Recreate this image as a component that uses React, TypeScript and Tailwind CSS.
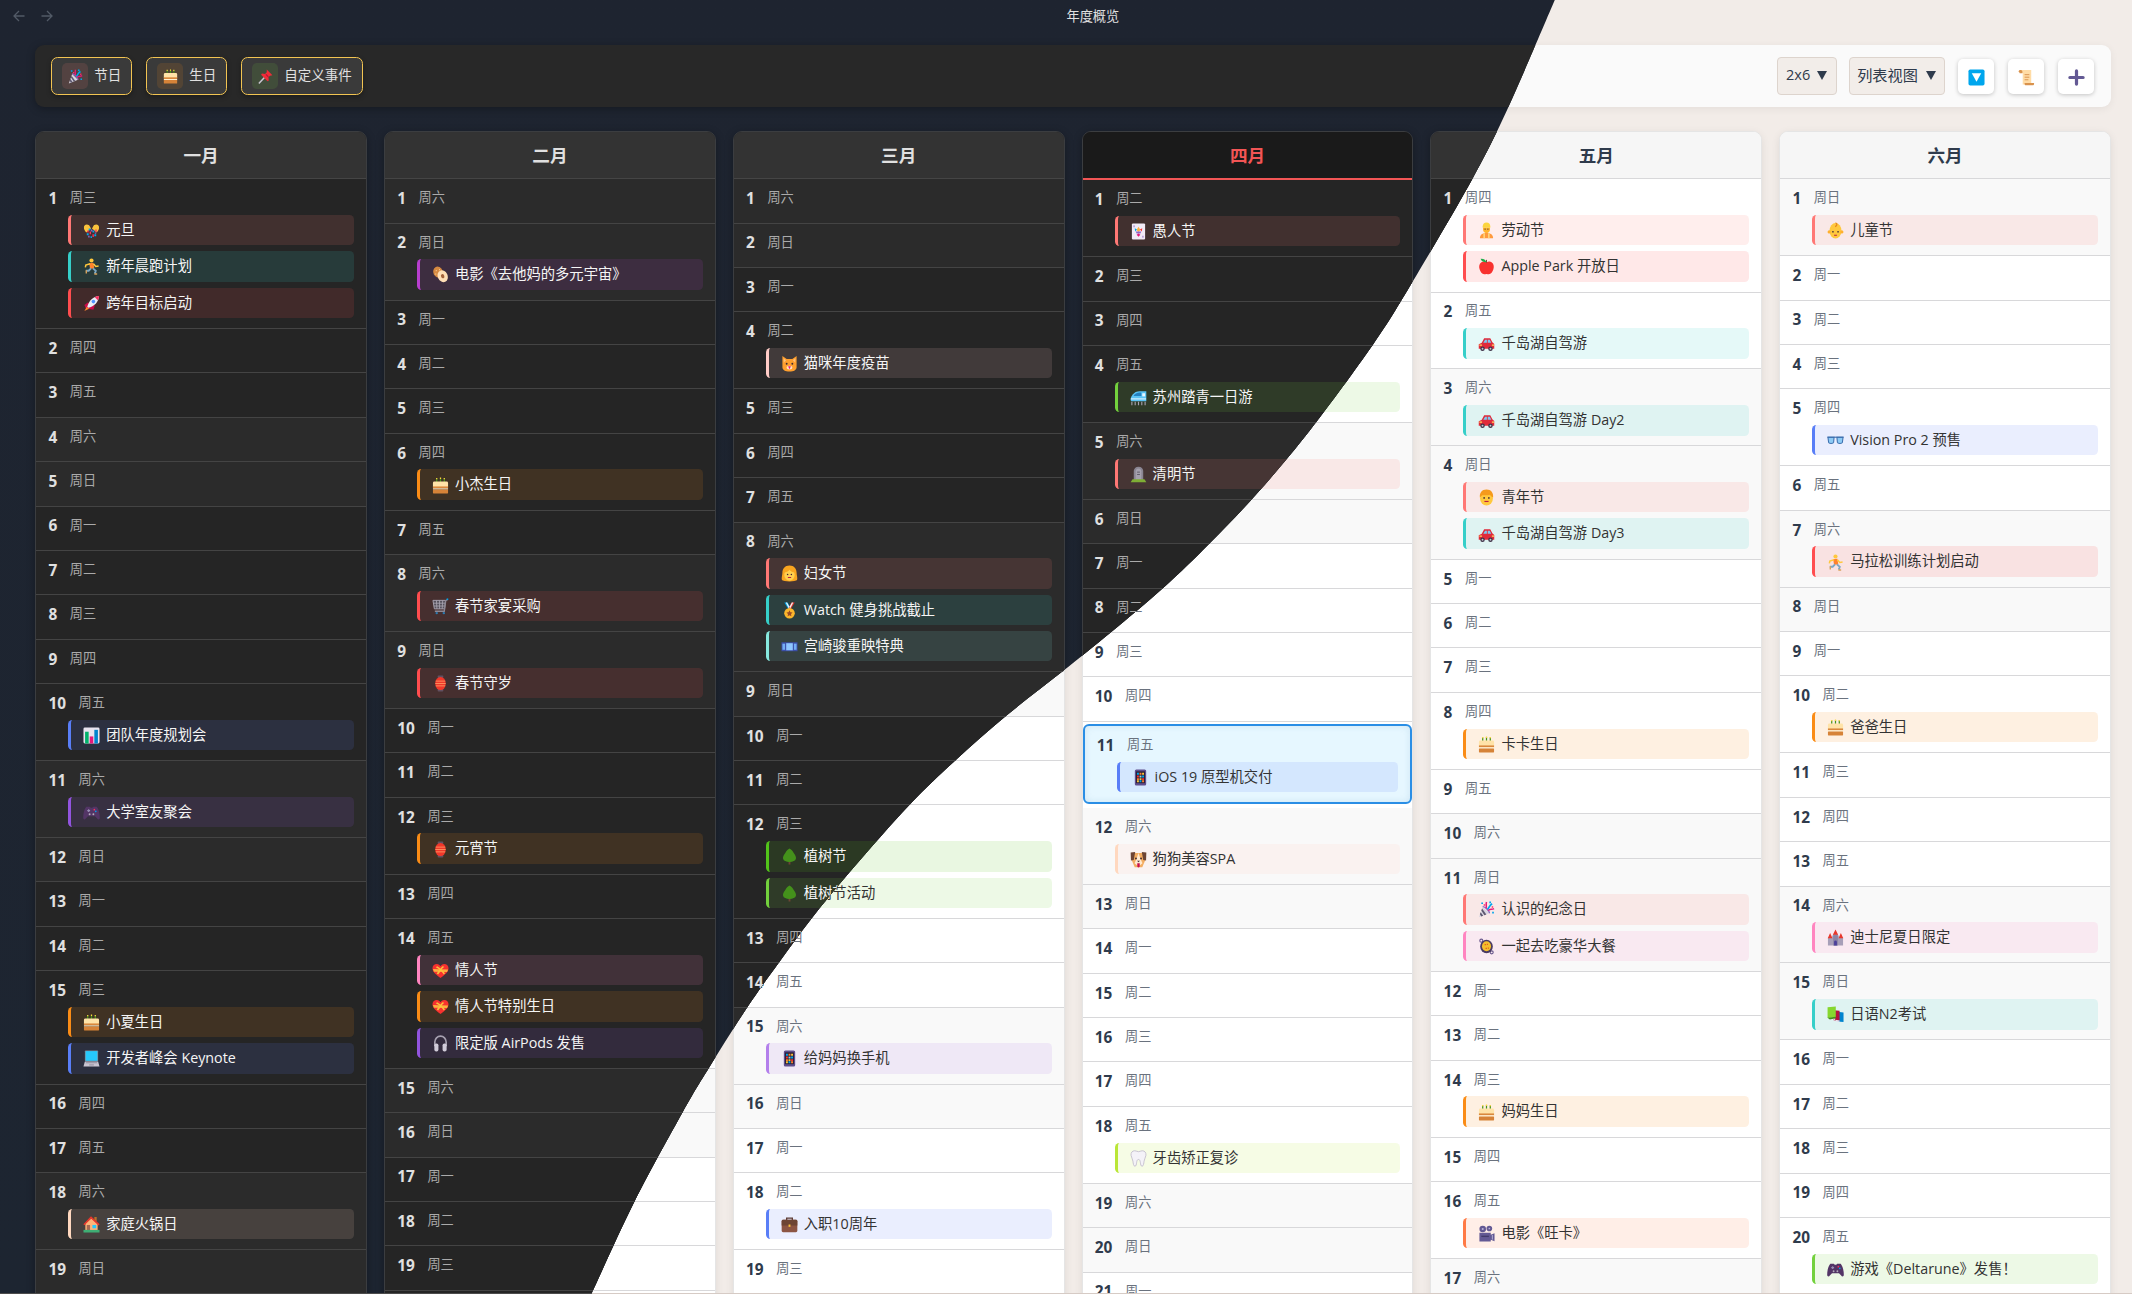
import React from "react";
import clsx from "clsx";

/* ------------------------------------------------------------------ icons */

const GLYPHS: Record<string, React.ReactNode> = {
  confetti: (
    <>
      <path d="M1 6C.5 3 4 1.500 6.500 3.500L8.500 7 3.500 11C1.800 9.500 1 7.500 1 6Z" fill="#f9c23c" />
      <path d="M17 6C17.500 3 14 1.500 11.500 3.500L9.500 7 14.500 11C16.200 9.500 17 7.500 17 6Z" fill="#f9c23c" />
      <path d="M6 7h2v2H6zM10 9h2v2h-2zM4 12h2v2H4zM12 13h2v2h-2zM8 15h1.500v2H8z" fill="#00a6ed" />
      <path d="M7 10h1.500v3H7zM13 8h1.500v2.500H13zM10 13h1.500v3H10zM4.500 9H6v2H4.500z" fill="#f92f60" />
      <path d="M8.500 8H10v2H8.500zM5.500 14.500H7v2H5.500zM12.500 11H14v1.500h-1.500z" fill="#8d65c5" />
    </>
  ),
  runner: (
    <>
      <circle cx="9" cy="2.600" r="2.200" fill="#ffc83d" />
      <path d="M6.500 5.500l4.500-.5 1 6-4.500.5Z" fill="#ff822d" />
      <path d="M7.500 6L3 7.500 2.500 10M11 6l2.500 3 3-.5" stroke="#ffc83d" strokeWidth="1.600" fill="none" />
      <path d="M8.500 11L6 13.500H3M10.500 11l3 2.500-1 3" stroke="#7aa7c4" strokeWidth="2" fill="none" />
      <path d="M3.500 13v3.500M12 17h3" stroke="#d8a25a" strokeWidth="1.500" />
    </>
  ),
  rocket: (
    <>
      <path d="M5 8L1.500 10.500 3 14l8 1.500L12.500 11Z" fill="#ca0b4a" />
      <path d="M4.500 12.500C6 6 11 1.500 17 1c-.500 6.500-5 11-11.500 12.500Z" fill="#e9eef5" />
      <path d="M12.500 2.500C14 1.500 15.500 1 17 1c0 1.500-.5 3-1.300 4.500Z" fill="#f92f60" />
      <circle cx="11" cy="7" r="1.900" fill="#5092ff" />
      <path d="M4 12.500L1.500 17l5-2.500Z" fill="#ff822d" />
    </>
  ),
  chart: (
    <>
      <rect x=".5" y=".5" width="17" height="17" rx="1.500" fill="#e8e4ef" />
      <rect x="2.200" y="5" width="3.800" height="12.500" fill="#00b26b" />
      <rect x="7.100" y="10" width="3.800" height="7.500" fill="#e5187a" />
      <rect x="12" y="3" width="3.800" height="14.500" fill="#0084ce" />
    </>
  ),
  gamepad: (
    <>
      <path d="M3.500 3h3.700l1 1h1.600l1-1h3.700c1.800 2 3.300 6.500 3.300 11.500 0 2-1.800 2.500-2.800.8L12.700 13H5.300L3 15.300C2 17 .2 16.500.2 14.500.2 9.500 1.700 5 3.500 3Z" fill="#533566" />
      <path d="M4.500 7h3M6 5.500v3" stroke="#998eb5" strokeWidth="1.200" />
      <circle cx="12" cy="6" r=".9" fill="#f92f60" />
      <circle cx="13.500" cy="7.800" r=".9" fill="#00a6ed" />
      <circle cx="7" cy="10.800" r="1" fill="#b4acbc" />
      <circle cx="11" cy="10.800" r="1" fill="#b4acbc" />
    </>
  ),
  cake: (
    <>
      <path d="M5 1.500v5M9 1v5.500M13 1.500v5" stroke="#44911b" strokeWidth="1.300" />
      <path d="M5 1v1.500M9 .5V2M13 1v1.500" stroke="#fcd53f" strokeWidth="1.300" />
      <path d="M1 6.300A1.500 1.500 0 0 1 2.500 4.800h13A1.500 1.500 0 0 1 17 6.300V11H1Z" fill="#ffe3a8" />
      <rect x="1" y="10" width="16" height="2" fill="#d9883d" />
      <rect x="1" y="12" width="16" height="1.300" fill="#fff1d0" />
      <rect x="1" y="13.200" width="16" height="4.200" rx=".6" fill="#d68338" />
    </>
  ),
  laptop: (
    <>
      <rect x="2" y=".5" width="14" height="11.500" rx=".8" fill="#7d8794" />
      <rect x="2.800" y="1.200" width="12.400" height="10.200" fill="#26c9fc" />
      <path d="M2 12.200h14l1.500 5.200H.5Z" fill="#c9c5d1" />
      <path d="M3 13.500h12M6.500 15.800h5" stroke="#8f8a99" strokeWidth="1" />
    </>
  ),
  house: (
    <>
      <path d="M2.500 8L9 2.500 15.500 8v7h-13Z" fill="#ffb478" />
      <path d="M12 1h2.500v5L12 4Z" fill="#b97028" />
      <path d="M1 9.300L8.500 1.500 17 9.300" stroke="#e8372c" strokeWidth="1.800" fill="none" />
      <rect x="4" y="9.500" width="3.500" height="6" fill="#a56953" />
      <rect x="10" y="9.500" width="4" height="3.500" fill="#26c9fc" />
      <path d="M.5 14.700h17v2.800H.5Z" fill="#3fae74" />
    </>
  ),
  bagel: (
    <>
      <ellipse cx="6.500" cy="6.500" rx="5" ry="6" transform="rotate(-25 6.500 6.500)" fill="#d68a41" />
      <path d="M4.500 4.500v1M8 3.500v1M4 8v1M9 7l.5 1" stroke="#ffe2b8" strokeWidth="1" />
      <ellipse cx="11.300" cy="10.800" rx="5.200" ry="6.500" transform="rotate(-25 11.300 10.800)" fill="#ffdfb5" />
      <ellipse cx="11.300" cy="10.800" rx="1.700" ry="2.300" transform="rotate(-25 11.300 10.800)" fill="#a5633a" />
    </>
  ),
  cart: (
    <>
      <path d="M1 2.500h13.500L13.300 11.500H2.500Z" fill="#55515c" stroke="#a9a4b0" strokeWidth="1" />
      <path d="M1.500 5.500h12.500M2 8.500h11.500M4.700 2.500l.5 9M8 2.500v9M11.300 2.500l-.5 9" stroke="#a9a4b0" strokeWidth=".9" />
      <path d="M16.500 1.500L14.500 3 13 14H3" stroke="#8d8894" strokeWidth="1.400" fill="none" />
      <path d="M15.500 1l1.700.5" stroke="#00a6ed" strokeWidth="1.600" />
      <circle cx="5" cy="16" r="1.300" fill="#2b7ab0" />
      <circle cx="12.500" cy="16" r="1.300" fill="#2b7ab0" />
    </>
  ),
  lantern: (
    <>
      <rect x="6" y=".5" width="6" height="3" rx="1" fill="#635061" />
      <rect x="6" y="14.500" width="6" height="3" rx="1" fill="#635061" />
      <ellipse cx="9" cy="9" rx="5.600" ry="7" fill="#f0372a" />
      <path d="M4 6.500h10M3.500 9h11M4 11.500h10" stroke="#ff9a62" strokeWidth=".9" />
    </>
  ),
  heart: (
    <>
      <path d="M9 17C4 13.300.5 10.500.5 6.700.5 3.500 2.800 2 5 2c2 0 3.300 1.200 4 2.500C9.700 3.200 11 2 13 2c2.200 0 4.500 1.500 4.500 4.700C17.500 10.500 14 13.300 9 17Z" fill="#f8312f" />
      <path d="M1 7.500l16 .5-1 2.500L2 10.300Z" fill="#fcb03f" />
      <path d="M4 5.500l4 2.500-3 4.300 1.500 1 3-4 3 4 1.300-1.300L10 8l3-3-2-.5-2 2.500-3.500-2.500Z" fill="#fcc33c" />
    </>
  ),
  headphones: (
    <>
      <path d="M3 12V7.500a6 6.300 0 0 1 12 0V12" stroke="#a7a1b0" strokeWidth="1.700" fill="none" />
      <rect x="2.500" y="9" width="4.300" height="8.500" rx="1.900" fill="#d0cbd8" />
      <rect x="11.200" y="9" width="4.300" height="8.500" rx="1.900" fill="#d0cbd8" />
    </>
  ),
  cat: (
    <>
      <path d="M1.500 1L6 4.300h6L16.500 1v12c0 3-3 4.500-7.500 4.500S1.500 16 1.500 13Z" fill="#ff9f2e" />
      <path d="M2.800 3.500l2.700 2L3 8ZM15.200 3.500l-2.700 2L15 8Z" fill="#ffc07a" />
      <circle cx="6" cy="9.300" r="1" fill="#402a32" />
      <circle cx="12" cy="9.300" r="1" fill="#402a32" />
      <ellipse cx="9" cy="13.300" rx="3" ry="2" fill="#ffe4c4" />
      <path d="M7.500 12h3L9 15Z" fill="#e5187a" />
    </>
  ),
  woman: (
    <>
      <path d="M9 .5C4 .5 1.500 4 1.500 8c0 3-1.300 5.500-.5 8 1.500 2 14.500 2 16 0 .8-2.500-.5-5-.5-8C16.500 4 14 .5 9 .5Z" fill="#f9a520" />
      <ellipse cx="9" cy="10.500" rx="5.500" ry="6.300" fill="#ffcf4f" />
      <path d="M3.500 8c2 0 4.500-1.500 5.500-3 1 1.500 3.500 3 5.500 3l-1-4.500-4.500-2-4.500 2Z" fill="#f9a520" />
      <circle cx="7" cy="10" r=".8" fill="#402a32" />
      <circle cx="11" cy="10" r=".8" fill="#402a32" />
      <path d="M7.300 13.200h3.400" stroke="#bb1d45" strokeWidth="1.100" />
    </>
  ),
  medal: (
    <>
      <path d="M3.500.5H7L10 6l-2 2Z" fill="#00a6ed" />
      <path d="M14.500.5H11L8 6l2 2Z" fill="#e8372c" />
      <path d="M5 .5h1.500l3 5.500-1 1.500ZM13 .5h-1.500l-3 5.500 1 1.500Z" fill="#eef2f6" />
      <circle cx="9" cy="12" r="5.600" fill="#fcb62b" />
      <path d="M9 8.800l1 2.100 2.200.3-1.600 1.500.4 2.300-2-1.100-2 1.100.4-2.300-1.600-1.500 2.200-.3Z" fill="#9a4a26" />
    </>
  ),
  film: (
    <>
      <rect x=".5" y="4.500" width="17" height="9.500" fill="#3c4fa8" />
      <rect x="5.500" y="5.500" width="7" height="7.500" fill="#8fc7ff" />
      <rect x="1.500" y="6" width="2.800" height="6.500" fill="#74aef5" />
      <rect x="13.700" y="6" width="2.800" height="6.500" fill="#74aef5" />
    </>
  ),
  tree: (
    <>
      <rect x="8" y="12" width="2" height="5.500" fill="#6d4534" />
      <path d="M9 .5C11.500 1.700 12.300 3.300 13.300 5c1.500 2 3 4 2.500 6.400C15.300 13.700 12.500 14.700 9 14.700S2.700 13.700 2.200 11.400C1.700 9 3.200 7 4.700 5 5.700 3.300 6.500 1.700 9 .5Z" fill="#44911b" />
    </>
  ),
  phone: (
    <>
      <rect x="3" y=".5" width="12" height="17" rx="1.600" fill="#5d4d8c" />
      <rect x="4.300" y="2.500" width="9.400" height="12.500" fill="#2a1f35" />
      <path d="M5.300 4h2v2h-2zM10.700 7h2v2h-2zM8 12h2v2H8z" fill="#00a6ed" />
      <path d="M8 4h2v2H8zM5.300 9.700h2v2h-2zM10.700 12h2v2h-2z" fill="#ff822d" />
      <path d="M10.700 4h2v2h-2zM8 9.700h2v2H8zM5.300 12h2v2h-2z" fill="#f9c23c" />
      <path d="M5.300 7h2v2h-2zM10.700 9.700h2v2h-2z" fill="#f8312f" />
      <path d="M8 7h2v2H8z" fill="#7fd6f5" />
    </>
  ),
  briefcase: (
    <>
      <path d="M6 4.500V2.300h6v2.200" stroke="#5c3a33" strokeWidth="1.400" fill="none" />
      <rect x=".7" y="4" width="16.600" height="13.200" rx="1.500" fill="#8c5543" />
      <path d="M.7 5.500A1.500 1.500 0 0 1 2.200 4h13.600a1.500 1.500 0 0 1 1.500 1.500V10H.7Z" fill="#6d4534" />
      <rect x="8" y="9" width="2" height="2.500" fill="#f9c23c" />
    </>
  ),
  joker: (
    <>
      <rect x="2" y=".5" width="14" height="17" rx="1.200" fill="#f1eaf6" />
      <path d="M5.500 9L5 5.500l2.500 1.500Z" fill="#00a6ed" />
      <path d="M7 7.500L9 4l2 3.500-2 2Z" fill="#fcb03f" />
      <path d="M12.500 9L13 5.500 10.500 7Z" fill="#f8312f" />
      <path d="M6 9h6l-1 2H7Z" fill="#8d65c5" />
      <path d="M7 12.500l2 2 2-2-2-1.500Z" fill="#e5187a" />
      <path d="M4.300 2.500v2M13.700 13.500v2" stroke="#8d65c5" strokeWidth="1" />
    </>
  ),
  train: (
    <>
      <path d="M.7 10c1.500-4.500 5-7.500 9.300-7.500h7.300V13H1.500C.5 12.500.5 11 .7 10Z" fill="#5bc4f5" />
      <path d="M4 7c1.500-2 4-3.300 6-3.300h2v3.800H4Z" fill="#2480c0" />
      <rect x="13" y="4.500" width="3" height="3.300" fill="#e8f7ff" />
      <path d="M1 10.500h16" stroke="#f5fbff" strokeWidth="1" />
      <path d="M2 13.500v3.800M5.500 13.500v3.800M9 13.500v3.800M12.500 13.500v3.800M16 13.500v3.800" stroke="#a7a1b0" strokeWidth="1.200" />
    </>
  ),
  grave: (
    <>
      <path d="M4 15V5C4 3 6 .7 9 .7S14 3 14 5v10Z" fill="#8a8592" />
      <path d="M6 15V5.500C6 4 7.300 2.700 9 2.700S12 4 12 5.500V15Z" fill="#a5a0ad" />
      <path d="M7.500 6.500h3M7.500 9h3" stroke="#5f5a68" strokeWidth="1" />
      <path d="M.7 17.300l2-3.300h12.600l2 3.300Z" fill="#7fae35" />
    </>
  ),
  dog: (
    <>
      <path d="M3.500 2h11l1.500 8-3 7.300H5L2 10Z" fill="#f3ad61" />
      <path d="M.7 1.700L5.500 1 4 9.500 1 10ZM17.300 1.700L12.500 1 14 9.500l3 .5Z" fill="#6d4534" />
      <path d="M9 2l2 6 2.200 5L9 16.500 4.800 13 7 8Z" fill="#ffe9cf" />
      <circle cx="6.300" cy="8" r="1" fill="#402a32" />
      <circle cx="11.700" cy="8" r="1" fill="#402a32" />
      <path d="M7.500 10.300h3L9 12Z" fill="#402a32" />
      <path d="M7.700 13h2.600v3a1.300 1.500 0 0 1-2.600 0Z" fill="#ca0b4a" />
    </>
  ),
  tooth: (
    <path d="M5 .8c1.800 0 2.500 1 4 1s2.200-1 4-1c2.700 0 4.200 2.100 3.900 4.800-.3 2.300-1.700 3.700-2 6.200-.3 2.500-.7 5.400-2.100 5.400s-1.500-2.200-1.800-3.900C10.700 11.700 10.400 10 9 10s-1.700 1.700-2 3.300c-.3 1.700-.4 3.900-1.800 3.900s-1.800-2.900-2.100-5.400c-.3-2.500-1.700-3.900-2-6.200C.8 2.900 2.300.8 5 .8Z" fill="#f4f2f8" stroke="#c0bacb" strokeWidth=".9" />
  ),
  worker: (
    <>
      <path d="M5 4.500C5 2 6.500.5 9 .5s4 1.500 4 4V6H5Z" fill="#fcd53f" />
      <path d="M5.300 6h7.400v2c0 2-1.500 3.800-3.700 3.800S5.300 10 5.300 8Z" fill="#ffb52e" />
      <path d="M2 17.300c0-3.800 2.800-5.600 7-5.600s7 1.800 7 5.600Z" fill="#ff9a3d" />
      <path d="M6.500 12v5.300M11.500 12v5.300" stroke="#ffe28a" strokeWidth="1.400" />
      <circle cx="7.500" cy="7.500" r=".7" fill="#402a32" />
      <circle cx="10.500" cy="7.500" r=".7" fill="#402a32" />
    </>
  ),
  apple: (
    <>
      <path d="M9 4.500c2-1 4-1 5.700.2 2 1.600 2.500 4.300 1.600 7.300-.8 2.700-2.600 5.300-4.800 5.300-1 0-1.500-.3-2.500-.3s-1.500.3-2.500.3c-2.200 0-4-2.600-4.800-5.300-1-3-.4-5.700 1.600-7.300C5 3.500 7 3.500 9 4.500Z" fill="#f8312f" />
      <path d="M8.800 4.500C8.500 2.300 6.500.5 2.800.7c.5 2.200 3 4 6 3.800Z" fill="#1fae4b" />
      <path d="M9 5V2" stroke="#6d4534" strokeWidth="1" />
    </>
  ),
  car: (
    <>
      <path d="M4 8.300L6.500 3.500H13l2.200 4.300 2 1.700V14.500H.8v-4.700Z" fill="#e02a3a" />
      <path d="M5.600 8.200L7.500 4.900h1.900v3.300ZM10.300 4.900h2.200l1.500 3.300h-3.700Z" fill="#7fc8f0" />
      <path d="M1.500 10.700h2.800M14.700 10.700h2.300" stroke="#ffd35c" strokeWidth="1.200" />
      <circle cx="4.800" cy="14.500" r="2.400" fill="#3f3247" />
      <circle cx="13.200" cy="14.500" r="2.400" fill="#3f3247" />
      <circle cx="4.800" cy="14.500" r="1" fill="#c9c5d1" />
      <circle cx="13.200" cy="14.500" r="1" fill="#c9c5d1" />
    </>
  ),
  boy: (
    <>
      <ellipse cx="9" cy="10" rx="6.800" ry="7.500" fill="#ffc83d" />
      <path d="M2 9C1.500 4 4 .5 9 .5S16.500 4 16 9c-1.500-1-2.800-2-3.300-3C10 7 5.200 6.500 4.500 6.500Z" fill="#f59a1c" />
      <circle cx="6.500" cy="9.500" r=".9" fill="#402a32" />
      <circle cx="11.500" cy="9.500" r=".9" fill="#402a32" />
      <path d="M6.800 13.200h4.400" stroke="#bb1d45" strokeWidth="1.200" />
    </>
  ),
  baby: (
    <>
      <ellipse cx="9" cy="9.300" rx="6.300" ry="8.200" fill="#ffc83d" />
      <circle cx="2.300" cy="10.500" r="1.700" fill="#ffb02e" />
      <circle cx="15.700" cy="10.500" r="1.700" fill="#ffb02e" />
      <path d="M9 .8c2 .5 2 3.500-.5 4" stroke="#e8871c" strokeWidth="1.300" fill="none" />
      <circle cx="6.300" cy="10.300" r=".9" fill="#402a32" />
      <circle cx="11.700" cy="10.300" r=".9" fill="#402a32" />
      <path d="M7.500 14h3" stroke="#bb1d45" strokeWidth="1.200" />
    </>
  ),
  popper: (
    <>
      <path d="M5 6l7 7L1 17.300Z" fill="#d9d5e0" />
      <path d="M4.300 8l4.500 6.300-2 .8-3.300-5ZM2.800 11.800l2.700 3.800-2 .8-1.500-2.400Z" fill="#5e5870" />
      <path d="M5 6c2-.5 7.500 5 7 7" stroke="#8d65c5" strokeWidth="1.500" fill="none" />
      <path d="M8.500 7.500C9.500 5.500 8 4 9 1M11 10c1.500-2 3.500-.5 6-2" stroke="#e5187a" strokeWidth="1.600" fill="none" />
      <path d="M10 8.500c2-1 1.500-3.500 5-5.500" stroke="#00a6ed" strokeWidth="1.800" fill="none" />
      <path d="M3.500 1.500h1.800v1.800H3.500zM15 11.500h1.800v1.800H15zM12 .5h1.800v1.800H12z" fill="#00a6ed" />
      <path d="M6 3.500h1.600v1.600H6zM14.500 5.500h1.600v1.600h-1.600z" fill="#f92f60" />
    </>
  ),
  pan: (
    <>
      <circle cx="3.500" cy="2.800" r="1.600" stroke="#6b5a8e" strokeWidth="1.200" fill="none" />
      <circle cx="14.500" cy="15.200" r="1.600" stroke="#6b5a8e" strokeWidth="1.200" fill="none" />
      <ellipse cx="9" cy="9" rx="6.700" ry="7.200" fill="#4a3b63" />
      <ellipse cx="9" cy="8.800" rx="4.800" ry="5.300" fill="#f5bf2c" />
      <path d="M7 7h1.500M10 6v1.500M8 11h1.500M11 10v1.500" stroke="#e8621c" strokeWidth="1.200" />
    </>
  ),
  camera: (
    <>
      <circle cx="5" cy="4.200" r="3.500" fill="#635994" />
      <circle cx="12" cy="3.700" r="3" fill="#635994" />
      <circle cx="5" cy="4.200" r="1.100" fill="#b9b2d8" />
      <circle cx="12" cy="3.700" r=".9" fill="#b9b2d8" />
      <path d="M1.500 8.300h12v2l4-1.500v8.400l-4-1.700v2h-12Z" fill="#635994" />
      <path d="M3.500 12h8" stroke="#433b6b" strokeWidth="1.500" />
      <path d="M15.200 10.500v5" stroke="#b9b2d8" strokeWidth="1" />
    </>
  ),
  glasses: (
    <>
      <path d="M1 5.500h6.500L7 11c-.3 1.500-5 1.500-5.300 0ZM10.500 5.500H17L16.300 11c-.3 1.500-5 1.500-5.300 0Z" fill="#8ecbf5" stroke="#3d6fae" strokeWidth="1.100" />
      <path d="M.5 5.500h17" stroke="#3d6fae" strokeWidth="1.200" />
    </>
  ),
  castle: (
    <>
      <path d="M1 9h4.500V7h7v2H17v8.500H1Z" fill="#a79fb8" />
      <path d="M6.500 5.500h5v12h-5Z" fill="#8b84a6" />
      <path d="M9 .5l2.800 5.500H6.200ZM3.300 4.200L5.800 9.700H.8ZM14.700 4.200l2.500 5.500h-5Z" fill="#e8372c" />
      <path d="M7.500 17.500v-3.800a1.500 1.500 0 0 1 3 0v3.800Z" fill="#4b3f9a" />
    </>
  ),
  books: (
    <>
      <path d="M11 6l6.500 1v10l-6.500-.5Z" fill="#0084ce" />
      <path d="M7 4.500l6.300.5v10.700L7 15Z" fill="#b5123e" />
      <path d="M9 14.500l4.300.8v1.500L10 17ZM5 12l4 1.500-1 1.500Z" fill="#e8e4ef" />
      <path d="M.6 1.200L9.300.6v11l-8.700 1Z" fill="#86d72f" />
      <path d="M.6 12.500l8.700-1V13l-6.300 1.300Z" fill="#44911b" />
    </>
  ),
  pin: (
    <>
      <path d="M8 10L1 17.300" stroke="#c9c5d1" strokeWidth="1.800" />
      <path d="M10.500.7l6.800 6.800-2.800.5-2 2 .5 3.700-1.500 1L3.700 7l1-1.500 3.800.5 2-2Z" fill="#f02c38" />
      <path d="M9.500 6.500l3 3" stroke="#b3133a" strokeWidth="1.300" />
    </>
  ),
  down: (
    <>
      <rect x=".5" y=".5" width="17" height="17" rx="1.800" fill="#00a6ed" />
      <path d="M4 4.500h10L9 13.500Z" fill="#fff" />
    </>
  ),
  scroll: (
    <>
      <path d="M2.500 1h11.500v15.500H5V4H2.500Z" fill="#ffdca6" />
      <path d="M.8 2.500C.8 1.200 1.800 1 2.500 1S4.700 1.200 4.700 3v1.500H1.800Z" fill="#d9924c" />
      <path d="M7 6h5M7 8.700h5M7 11.400h4" stroke="#d9924c" strokeWidth="1" />
      <path d="M7 14.800h10v1.200c0 .8-.6 1.300-1.500 1.300H8.500C7.500 17.300 7 16.500 7 15.500Z" fill="#d9924c" />
    </>
  ),
  plus: <path d="M9 2v14M2 9h14" stroke="#635994" strokeWidth="3.400" strokeLinecap="round" />,
};

function Glyph({ name, className }: { name: string; className?: string }) {
  return (
    <svg viewBox="0 0 18 18" className={clsx("shrink-0", className)} aria-hidden="true">
      {GLYPHS[name]}
    </svg>
  );
}

/* ----------------------------------------------------------------- colours */

const TINTS = {
  coral: "border-[#ff7875] bg-[#ff7875]/13",
  red: "border-[#ff4d4f] bg-[#ff4d4f]/13",
  teal: "border-[#36cfc9] bg-[#36cfc9]/13",
  mint: "border-[#87e8de] bg-[#87e8de]/13",
  blue: "border-[#597ef7] bg-[#597ef7]/13",
  violet: "border-[#9254de] bg-[#9254de]/13",
  lilac: "border-[#b37feb] bg-[#b37feb]/13",
  magenta: "border-[#b83ecf] bg-[#b83ecf]/13",
  pink: "border-[#ff85c0] bg-[#ff85c0]/13",
  orange: "border-[#fa8c16] bg-[#fa8c16]/13",
  ember: "border-[#ff7a45] bg-[#ff7a45]/13",
  peach: "border-[#ffd8bf] bg-[#ffd8bf]/13",
  salmon: "border-[#ffd8bf] bg-[#ffe0d8]/25",
  blush: "border-[#ffccc7] bg-[#ffccc7]/13",
  green: "border-[#52c41a] bg-[#52c41a]/13",
  leaf: "border-[#73d13d] bg-[#73d13d]/13",
  lime: "border-[#bae637] bg-[#bae637]/13",
};

type Tint = keyof typeof TINTS;

const DARK = {
  page: "bg-linear-to-b from-[#1e2430] to-[#1d2531]",
  title: "text-[#e0e0e0]",
  arrows: "text-[#525a66]",
  bar: "bg-[#282828] shadow-[0_2px_9px_rgba(0,0,0,0.3)]",
  chip: "border-[#f2c452] bg-[#3a3a3a] text-[#e0e0e0] shadow-[0_2px_5px_rgba(0,0,0,0.3)]",
  select: "border-[#444] bg-[#333] text-[#e0e0e0]",
  action: "bg-[#333] shadow-[0_2px_4px_rgba(0,0,0,0.3)]",
  column: "border-[#3b3d40] bg-[#252525] shadow-[0_2px_9px_rgba(0,0,0,0.3)]",
  head: "border-b border-[#454545] bg-[#333] text-[#e0e0e0]",
  currentHead: "border-b-2 border-[#f25555] bg-[#1a1a1a] text-[#f25555]",
  row: "border-[#444] bg-[#252525]",
  weekend: "border-[#444] bg-[#2b2b2b]",
  today: "border-[#1890ff] bg-[#112a3a]",
  day: "text-[#e0e0e0]",
  weekday: "text-[#aaa]",
  event: "text-[#f5f5f5]",
  edge: "bg-[#4c4c4c]",
};

const LIGHT: typeof DARK = {
  page: "bg-[#f2ece8]",
  title: "text-[#333]",
  arrows: "text-[#aaa]",
  bar: "bg-[#fafafa] shadow-[0_2px_9px_rgba(0,0,0,0.06)]",
  chip: "border-[#e8b94a] bg-white text-[#333] shadow-sm",
  select: "border-[#ddd4cd] bg-[#f2ede9] text-[#2f3b4c]",
  action: "bg-white shadow-[0_1px_4px_rgba(0,0,0,0.22)]",
  column: "border-[#e5e5e5] bg-white shadow-[0_2px_9px_rgba(0,0,0,0.08)]",
  head: "border-b border-[#d8d8da] bg-[#f6f6f6] text-[#2f3b4c]",
  currentHead: "border-b-2 border-[#f25555] bg-[#fff1f0] text-[#f25555]",
  row: "border-[#d8d8da] bg-white",
  weekend: "border-[#d8d8da] bg-[#f9f9f9]",
  today: "border-[#2a8ee5] bg-[#e6f7ff] shadow-[inset_0_0_7px_rgba(24,100,160,0.12)]",
  day: "text-[#2f3b4c]",
  weekday: "text-[#6a727e]",
  event: "text-[#333]",
  edge: "bg-[#d6cbc5]",
};

type Theme = typeof DARK;

/* -------------------------------------------------------------------- data */

type Entry = [icon: string, label: string, tint: Tint];

interface Month {
  name: string;
  start: number;
  days: number;
  current?: boolean;
  today?: number;
  events: Record<number, Entry[]>;
}

const WEEKDAYS = ["周日", "周一", "周二", "周三", "周四", "周五", "周六"];

/* `days` is how many of the month's rows fit above the fold. */
const MONTHS: Month[] = [
  {
    name: "一月",
    start: 3,
    days: 19,
    events: {
      1: [
        ["confetti", "元旦", "coral"],
        ["runner", "新年晨跑计划", "teal"],
        ["rocket", "跨年目标启动", "red"],
      ],
      10: [["chart", "团队年度规划会", "blue"]],
      11: [["gamepad", "大学室友聚会", "violet"]],
      15: [
        ["cake", "小夏生日", "orange"],
        ["laptop", "开发者峰会 Keynote", "blue"],
      ],
      18: [["house", "家庭火锅日", "peach"]],
    },
  },
  {
    name: "二月",
    start: 6,
    days: 19,
    events: {
      2: [["bagel", "电影《去他妈的多元宇宙》", "magenta"]],
      6: [["cake", "小杰生日", "orange"]],
      8: [["cart", "春节家宴采购", "red"]],
      9: [["lantern", "春节守岁", "red"]],
      12: [["lantern", "元宵节", "orange"]],
      14: [
        ["heart", "情人节", "pink"],
        ["heart", "情人节特别生日", "orange"],
        ["headphones", "限定版 AirPods 发售", "violet"],
      ],
    },
  },
  {
    name: "三月",
    start: 6,
    days: 19,
    events: {
      4: [["cat", "猫咪年度疫苗", "blush"]],
      8: [
        ["woman", "妇女节", "coral"],
        ["medal", "Watch 健身挑战截止", "teal"],
        ["film", "宫崎骏重映特典", "mint"],
      ],
      12: [
        ["tree", "植树节", "green"],
        ["tree", "植树节活动", "leaf"],
      ],
      15: [["phone", "给妈妈换手机", "lilac"]],
      18: [["briefcase", "入职10周年", "blue"]],
    },
  },
  {
    name: "四月",
    start: 2,
    days: 21,
    current: true,
    today: 11,
    events: {
      1: [["joker", "愚人节", "coral"]],
      4: [["train", "苏州踏青一日游", "leaf"]],
      5: [["grave", "清明节", "coral"]],
      11: [["phone", "iOS 19 原型机交付", "blue"]],
      12: [["dog", "狗狗美容SPA", "salmon"]],
      18: [["tooth", "牙齿矫正复诊", "lime"]],
    },
  },
  {
    name: "五月",
    start: 4,
    days: 17,
    events: {
      1: [
        ["worker", "劳动节", "coral"],
        ["apple", "Apple Park 开放日", "red"],
      ],
      2: [["car", "千岛湖自驾游", "teal"]],
      3: [["car", "千岛湖自驾游 Day2", "teal"]],
      4: [
        ["boy", "青年节", "coral"],
        ["car", "千岛湖自驾游 Day3", "teal"],
      ],
      8: [["cake", "卡卡生日", "orange"]],
      11: [
        ["popper", "认识的纪念日", "coral"],
        ["pan", "一起去吃豪华大餐", "pink"],
      ],
      14: [["cake", "妈妈生日", "orange"]],
      16: [["camera", "电影《旺卡》", "ember"]],
    },
  },
  {
    name: "六月",
    start: 0,
    days: 20,
    events: {
      1: [["baby", "儿童节", "coral"]],
      5: [["glasses", "Vision Pro 2 预售", "blue"]],
      7: [["runner", "马拉松训练计划启动", "red"]],
      10: [["cake", "爸爸生日", "orange"]],
      14: [["castle", "迪士尼夏日限定", "pink"]],
      15: [["books", "日语N2考试", "teal"]],
      20: [["gamepad", "游戏《Deltarune》发售！", "leaf"]],
    },
  },
];

const FILTERS: Entry[] = [
  ["popper", "节日", "coral"],
  ["cake", "生日", "orange"],
  ["pin", "自定义事件", "leaf"],
];

/* -------------------------------------------------------------- components */

function EventCard({ entry, theme }: { entry: Entry; theme: Theme }) {
  const [icon, label, tint] = entry;
  return (
    <div
      className={clsx(
        "flex h-[30.400px] items-center gap-[6px] rounded-[4.400px] border-l-3 pl-[12px] text-[14.300px] leading-none whitespace-nowrap",
        TINTS[tint],
      )}
    >
      <Glyph name={icon} className="mt-[1px] size-[17px]" />
      <span className={theme.event}>{label}</span>
    </div>
  );
}

function DayRow({ month, day, theme }: { month: Month; day: number; theme: Theme }) {
  const weekday = (month.start + day - 1) % 7;
  const weekend = weekday === 0 || weekday === 6;
  const today = month.today === day;
  const events = month.events[day];
  return (
    <div
      className={clsx(
        "shrink-0",
        today ? "mt-[2.200px] mb-[4px] rounded-[6px] border-2" : "border-b",
        today ? theme.today : weekend ? theme.weekend : theme.row,
        !events && "h-[44.420px]",
      )}
    >
      <div className="flex h-[35.700px] items-center pt-[1.500px] pl-[12.200px] leading-none">
        <span className={clsx("pt-[2px] text-[15.400px] font-bold", theme.day)}>{day}</span>
        <span className={clsx("ml-[12.600px] text-[13.200px]", theme.weekday)}>{WEEKDAYS[weekday]}</span>
      </div>
      {events && (
        <div className="flex flex-col gap-[6px] pr-[12px] pb-[9.850px] pl-[32px]">
          {events.map((entry) => (
            <EventCard key={entry[1]} entry={entry} theme={theme} />
          ))}
        </div>
      )}
    </div>
  );
}

function MonthColumn({ month, theme }: { month: Month; theme: Theme }) {
  return (
    <section
      className={clsx("flex h-[1300px] flex-col overflow-hidden rounded-t-[9px] border", theme.column)}
    >
      <h2
        className={clsx(
          "flex shrink-0 items-center justify-center pt-[1px] text-[17.600px] leading-none font-bold",
          month.current ? "h-[48.200px]" : "h-[47.200px]",
          month.current ? theme.currentHead : theme.head,
        )}
      >
        {month.name}
      </h2>
      {Array.from({ length: month.days }, (_, i) => (
        <DayRow key={i} month={month} day={i + 1} theme={theme} />
      ))}
    </section>
  );
}

function Caret() {
  return (
    <svg viewBox="0 0 10 9" className="mb-px h-[9px] w-[10px]" aria-hidden="true">
      <path d="M0 0h10L5 9Z" fill="currentColor" />
    </svg>
  );
}

function Toolbar({ theme }: { theme: Theme }) {
  return (
    <div className={clsx("mt-[13px] flex h-[62px] items-center rounded-[9px] px-[16px]", theme.bar)}>
      <div className="flex gap-[14px]">
        {FILTERS.map(([icon, label, tint]) => (
          <button
            key={label}
            className={clsx(
              "flex h-[38px] items-center gap-[6px] rounded-[6.600px] border px-[10px] text-[13.500px] leading-none",
              theme.chip,
            )}
          >
            <span className={clsx("flex size-[26px] items-center justify-center rounded-[5px]", TINTS[tint])}>
              <Glyph name={icon} className="size-[15px]" />
            </span>
            {label}
          </button>
        ))}
      </div>
      <div className="ml-auto flex items-center">
        <button
          className={clsx(
            "flex h-[38px] w-[60px] items-center gap-[8px] rounded-[4px] border pl-[8px] text-[14.500px] leading-none",
            theme.select,
          )}
        >
          <span className="w-[23px] pb-px">2x6</span>
          <Caret />
        </button>
        <button
          className={clsx(
            "ml-[12px] flex h-[38px] w-[96px] items-center gap-[8px] rounded-[4px] border pl-[7px] text-[15.200px] leading-none",
            theme.select,
          )}
        >
          <span className="w-[61px] pb-px whitespace-nowrap">列表视图</span>
          <Caret />
        </button>
        <div className="mr-[1px] ml-[13px] flex gap-[14px]">
          {["down", "scroll", "plus"].map((icon) => (
            <button
              key={icon}
              className={clsx("flex h-[35px] w-[36px] items-center justify-center rounded-[5px] pt-[2px]", theme.action)}
            >
              <Glyph name={icon} className="size-[17px]" />
            </button>
          ))}
        </div>
      </div>
    </div>
  );
}

function Arrow({ flip }: { flip?: boolean }) {
  return (
    <svg viewBox="0 0 12 12" className={clsx("size-[12px]", flip && "-scale-x-100")} aria-hidden="true">
      <path d="M11.500 6H1M6 1L1 6l5 5" fill="none" stroke="currentColor" strokeWidth="1.300" />
    </svg>
  );
}

function YearOverview({ theme }: { theme: Theme }) {
  return (
    <div
      className={clsx(
        "flex h-[1294px] w-[2132px] flex-col overflow-hidden font-['Open_Sans','Noto_Sans_CJK_SC',sans-serif]",
        theme.page,
      )}
    >
      <header className="grid h-[32px] shrink-0 grid-cols-[1066.500px_1fr] items-center leading-none">
        <div className={clsx("flex gap-[16px] pl-[12.500px]", theme.arrows)}>
          <Arrow />
          <Arrow flip />
        </div>
        <h1 className={clsx("pt-[1px] text-[13.200px]", theme.title)}>年度概览</h1>
      </header>
      <main className="min-h-0 flex-1 overflow-hidden pr-[21px] pl-[35.200px]">
        <Toolbar theme={theme} />
        <div className="mt-[24px] grid grid-cols-6 gap-[17px]">
          {MONTHS.map((month) => (
            <MonthColumn key={month.name} month={month} theme={theme} />
          ))}
        </div>
      </main>
      <div className={clsx("h-px shrink-0", theme.edge)} />
    </div>
  );
}

/* Points along the seam between the two themes, top to bottom. */
const SEAM: [number, number][] = [
  [1554.8, 0],
  [1508.4, 107],
  [1472.6, 178.5],
  [1413, 281],
  [1373.2, 344.3],
  [1310.2, 430],
  [1257, 493.5],
  [1209.7, 543.3],
  [1164, 587.3],
  [1111.3, 632],
  [1063, 671],
  [1006.5, 715.5],
  [955.3, 760.5],
  [910.3, 804],
  [851.5, 870],
  [811.6, 918.5],
  [779, 962.5],
  [747.3, 1007.3],
  [709, 1067.7],
  [682.6, 1112.3],
  [634.6, 1201.3],
  [591.4, 1294],
];

/* Catmull-Rom spline through the seam points, closed along the left side. */
function seamPath(points: [number, number][]) {
  let d = `M0 0L${points[0][0]} ${points[0][1]}`;
  for (let i = 0; i < points.length - 1; i++) {
    const a = points[Math.max(i - 1, 0)];
    const b = points[i];
    const c = points[i + 1];
    const e = points[Math.min(i + 2, points.length - 1)];
    d += `C${b[0] + (c[0] - a[0]) / 6} ${b[1] + (c[1] - a[1]) / 6} ${c[0] - (e[0] - b[0]) / 6} ${c[1] - (e[1] - b[1]) / 6} ${c[0]} ${c[1]}`;
  }
  return `${d}L0 1294Z`;
}

export default function App() {
  return (
    <div className="relative h-[1294px] w-[2132px] overflow-hidden">
      <YearOverview theme={LIGHT} />
      <div className="absolute inset-0" style={{ clipPath: `path("${seamPath(SEAM)}")` }}>
        <YearOverview theme={DARK} />
      </div>
    </div>
  );
}
